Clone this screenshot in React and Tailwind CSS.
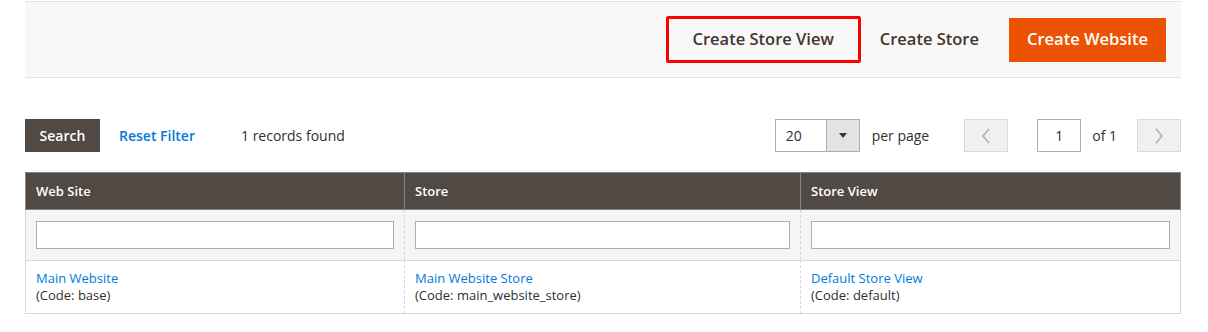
import React from 'react';

const font = { fontFamily: '"Open Sans", "Noto Sans", Arial, sans-serif' };

function Chevron({ dir }) {
  return (
    <svg width="10" height="16" viewBox="0 0 10 16" fill="none">
      <path
        d={dir === 'left' ? 'M8 1 L2 8 L8 15' : 'M2 1 L8 8 L2 15'}
        stroke="#adadad"
        strokeWidth="1.4"
      />
    </svg>
  );
}

export default function App() {
  const rows = [
    { site: 'Main Website', siteCode: 'base', store: 'Main Website Store', storeCode: 'main_website_store', view: 'Default Store View', viewCode: 'default' },
  ];

  return (
    <div className="w-[1208px] h-[332px] bg-white pl-[25px] text-[#303030]" style={font}>
      <div className="w-[1156px]">
        {/* Page actions bar */}
        <div className="mt-[1px] h-[77px] border-y border-[#e3e3e3] bg-[#f8f8f8] flex items-center justify-end pr-[15px]">
          <button className="w-[195px] h-[47px] border-[3px] border-[#ff0000] rounded-[2px] flex items-center justify-center text-[16.5px] font-semibold text-[#41362f] -mt-[1px]">
            Create Store View
          </button>
          <button className="ml-[19px] mr-[30px] text-[16.5px] font-semibold text-[#41362f]">
            Create Store
          </button>
          <button className="w-[157px] h-[44px] bg-[#eb5202] text-white text-[16.5px] font-semibold">
            Create Website
          </button>
        </div>

        {/* Grid toolbar */}
        <div className="mt-[41px] h-[33px] flex items-center text-[14px]">
          <button className="w-[75px] h-[33px] bg-[#514943] text-white font-semibold">Search</button>
          <button className="ml-[19px] text-[#007bdb] font-semibold">Reset Filter</button>
          <span className="ml-[46px]">1 records found</span>

          <div className="ml-auto flex items-center">
            <div className="flex w-[85px] h-[33px] border border-[#adadad] bg-white">
              <span className="flex-1 flex items-center pl-[10px]">20</span>
              <span className="w-[33px] border-l border-[#adadad] bg-[#e3e3e3] flex items-center justify-center">
                <svg width="8" height="5" viewBox="0 0 8 5"><path d="M0 0 H8 L4 5 Z" fill="#41362f" /></svg>
              </span>
            </div>
            <span className="ml-[12px]">per page</span>
            <button className="ml-[35px] w-[44px] h-[33px] bg-[#f0f0f0] border border-[#dadada] flex items-center justify-center">
              <Chevron dir="left" />
            </button>
            <div className="ml-[29px] w-[44px] h-[33px] border border-[#adadad] bg-white flex items-center justify-center">1</div>
            <span className="ml-[11px]">of 1</span>
            <button className="ml-[20px] w-[44px] h-[33px] bg-[#f0f0f0] border border-[#dadada] flex items-center justify-center">
              <Chevron dir="right" />
            </button>
          </div>
        </div>

        {/* Table */}
        <div className="mt-[20px] grid grid-cols-[379px_396px_1fr] text-[13px]">
          {['Web Site', 'Store', 'Store View'].map((h, i) => (
            <div
              key={h}
              className={`h-[38px] bg-[#514943] text-white font-semibold flex items-center pl-[10px] pt-[1px] border-y border-l border-[#8a837f] ${i === 2 ? 'border-r' : ''}`}
            >
              {h}
            </div>
          ))}
          {[0, 1, 2].map((i) => (
            <div
              key={i}
              className={`h-[50px] bg-[#f5f5f5] pl-[10px] pr-[10px] pt-[11px] border-l border-[#d6d6d6] ${i === 2 ? 'border-r' : ''}`}
              style={i === 0 ? undefined : { borderLeftStyle: 'dashed' }}
            >
              <input className="w-full h-[28px] border border-[#adadad] bg-white" />
            </div>
          ))}
          {rows.map((r) => (
            <React.Fragment key={r.site}>
              {[
                [r.site, r.siteCode],
                [r.store, r.storeCode],
                [r.view, r.viewCode],
              ].map(([name, code], i) => (
                <div
                  key={name}
                  className={`h-[54px] pl-[10px] pt-[9px] leading-[17px] border-y border-l border-[#d6d6d6] ${i === 2 ? 'border-r' : ''}`}
                  style={i === 0 ? undefined : { borderLeftStyle: 'dashed' }}
                >
                  <a className="text-[#007bdb] block">{name}</a>
                  <div>(Code: {code})</div>
                </div>
              ))}
            </React.Fragment>
          ))}
        </div>
      </div>
    </div>
  );
}
